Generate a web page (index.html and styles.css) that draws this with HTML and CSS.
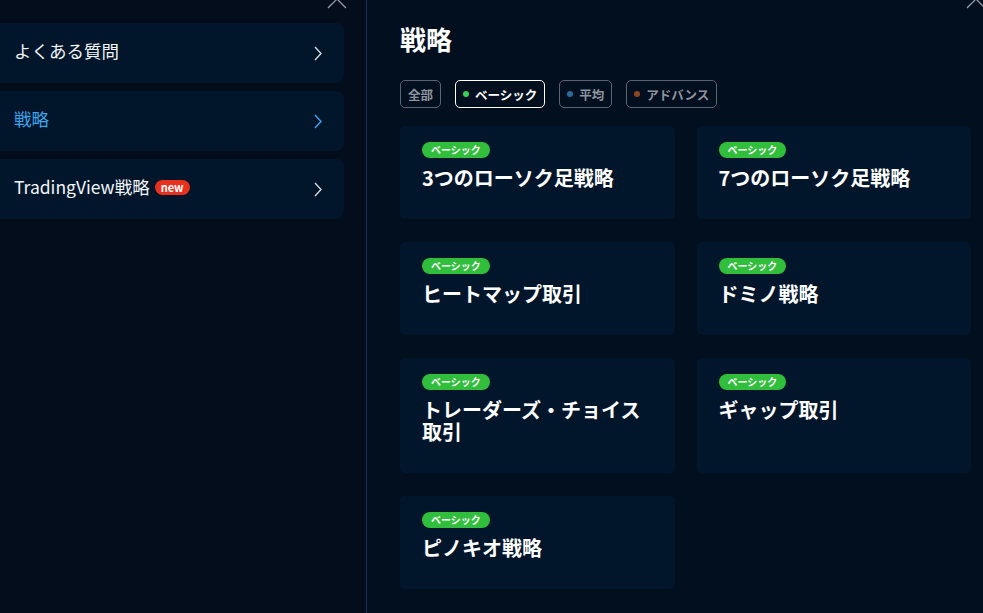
FILE: index.html
```html
<!DOCTYPE html>
<html lang="ja">
<head>
<meta charset="utf-8">
<title>戦略</title>
<link rel="stylesheet" href="styles.css">
</head>
<body>
<div class="app">
  <aside class="side">
    <button class="close close-side" aria-label="閉じる">
      <svg width="22" height="22" viewBox="0 0 22 22"><path d="M2 2L20 20M20 2L2 20" stroke="#8d96a3" stroke-width="1.4" fill="none"/></svg>
    </button>
    <nav class="menu">
      <a class="menu-item" href="#"><span class="menu-label">よくある質問</span>
        <svg class="chev" width="8" height="15" viewBox="0 0 8 15"><path d="M1 1L7 7.5L1 14" stroke="currentColor" stroke-width="1.4" fill="none"/></svg></a>
      <a class="menu-item active" href="#"><span class="menu-label">戦略</span>
        <svg class="chev" width="8" height="15" viewBox="0 0 8 15"><path d="M1 1L7 7.5L1 14" stroke="currentColor" stroke-width="1.4" fill="none"/></svg></a>
      <a class="menu-item" href="#"><span class="menu-label">TradingView戦略<span class="new">new</span></span>
        <svg class="chev" width="8" height="15" viewBox="0 0 8 15"><path d="M1 1L7 7.5L1 14" stroke="currentColor" stroke-width="1.4" fill="none"/></svg></a>
    </nav>
  </aside>
  <main class="main">
    <button class="close close-main" aria-label="閉じる">
      <svg width="22" height="22" viewBox="0 0 22 22"><path d="M2 2L20 20M20 2L2 20" stroke="#8d96a3" stroke-width="1.4" fill="none"/></svg>
    </button>
    <h1 class="title">戦略</h1>
    <div class="filters">
      <button class="chip">全部</button>
      <button class="chip active"><span class="dot dot-green"></span>ベーシック</button>
      <button class="chip"><span class="dot dot-blue"></span>平均</button>
      <button class="chip"><span class="dot dot-brown"></span>アドバンス</button>
    </div>
    <div class="grid">
      <div class="card"><span class="badge">ベーシック</span><h2 class="card-title">3つのローソク足戦略</h2></div>
      <div class="card"><span class="badge">ベーシック</span><h2 class="card-title">7つのローソク足戦略</h2></div>
      <div class="card"><span class="badge">ベーシック</span><h2 class="card-title">ヒートマップ取引</h2></div>
      <div class="card"><span class="badge">ベーシック</span><h2 class="card-title">ドミノ戦略</h2></div>
      <div class="card"><span class="badge">ベーシック</span><h2 class="card-title">トレーダーズ・チョイス取引</h2></div>
      <div class="card"><span class="badge">ベーシック</span><h2 class="card-title">ギャップ取引</h2></div>
      <div class="card"><span class="badge">ベーシック</span><h2 class="card-title">ピノキオ戦略</h2></div>
    </div>
  </main>
</div>
</body>
</html>
```
FILE: styles.css
```css
* { box-sizing: border-box; }
html, body {
  margin: 0;
  padding: 0;
  height: 100%;
  overflow: hidden;
  background: #020f1f;
  font-family: "Noto Sans CJK JP", "Noto Sans", sans-serif;
  color: #ffffff;
}
.app {
  display: flex;
  height: 613px;
}
.side {
  position: relative;
  width: 367px;
  flex: 0 0 367px;
  background: #030d1b;
  border-right: 1px solid #17304c;
}
.close {
  position: absolute;
  top: -12px;
  background: none;
  border: 0;
  padding: 0;
  width: 22px;
  height: 22px;
  cursor: pointer;
}
.close svg { display: block; }
.close-side { left: 326px; }
.close-main { right: -4px; }
.menu {
  display: flex;
  flex-direction: column;
  gap: 8px;
  padding-top: 23px;
  width: 344px;
}
.menu-item {
  display: flex;
  align-items: center;
  justify-content: space-between;
  height: 60px;
  padding: 0 22px 0 14px;
  background: #02162b;
  border-radius: 0 8px 8px 0;
  color: #f1f4f8;
  text-decoration: none;
  font-size: 17.5px;
}
.menu-item .chev { color: #d3d9e0; }
.menu-item.active { color: #3aa5ec; }
.menu-item.active .chev { color: #3aa5ec; }
.menu-label {
  display: flex;
  align-items: center;
  line-height: 24px;
  margin-top: -4px;
}
.new {
  display: inline-block;
  margin-left: 5px;
  height: 15px;
  line-height: 15px;
  padding: 0 6px;
  border-radius: 8px;
  background: #e8311d;
  color: #fff;
  font-size: 11px;
  font-weight: 700;
}
.main {
  position: relative;
  flex: 1;
  padding: 22px 12px 0 33px;
}
.title {
  margin: 0;
  font-size: 26px;
  line-height: 34px;
  font-weight: 700;
}
.filters {
  display: flex;
  gap: 14px;
  margin-top: 24px;
}
.chip {
  display: flex;
  align-items: center;
  gap: 6px;
  height: 28px;
  padding: 0 7px;
  background: transparent;
  border: 1px solid #5b6470;
  border-radius: 5px;
  color: #8e959e;
  font-family: inherit;
  font-size: 12.5px;
  font-weight: 700;
}
.chip.active {
  border-color: #ffffff;
  color: #ffffff;
}
.dot {
  width: 6px;
  height: 6px;
  border-radius: 50%;
  display: inline-block;
}
.dot-green { background: #35d05b; }
.dot-blue { background: #2a6c9c; }
.dot-brown { background: #8f4424; }
.grid {
  display: grid;
  grid-template-columns: 1fr 1fr;
  gap: 23px 22px;
  margin-top: 18px;
}
.card {
  display: flex;
  flex-direction: column;
  align-items: flex-start;
  background: #02162b;
  border-radius: 5px;
  padding: 16px 22px 30px;
}
.badge {
  display: block;
  height: 16px;
  line-height: 16px;
  padding: 0 9px;
  border-radius: 8px;
  background: #30be3c;
  color: #ffffff;
  font-size: 10px;
  font-weight: 700;
}
.card-title {
  margin: 9px 0 0;
  font-size: 20px;
  line-height: 22px;
  font-weight: 700;
}
```
